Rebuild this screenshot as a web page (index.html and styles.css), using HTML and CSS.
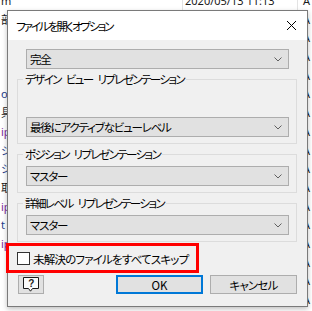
FILE: index.html
```html
<!DOCTYPE html>
<html lang="ja">
<head>
    <meta charset="UTF-8">
    <meta name="viewport" content="width=device-width, initial-scale=1.0">
    <title>ファイルを開くオプション</title>
    <link rel="stylesheet" href="styles.css">
</head>
<body>
    <!-- ファイル一覧 (ダイアログの後ろ) -->
    <div class="files">
        <div class="row first"><span class="name">m</span><span class="date">2020/05/13 11:13</span><span class="attr">A</span></div>
        <div class="row"><span class="name">部</span><span class="date"></span><span class="attr">A</span></div>
        <div class="row"><span class="name"></span><span class="date"></span><span class="attr">A</span></div>
        <div class="row"><span class="name"></span><span class="date"></span><span class="attr">A</span></div>
        <div class="row"><span class="name"></span><span class="date"></span><span class="attr">A</span></div>
        <div class="row"><span class="name blue">ot</span><span class="date"></span><span class="attr">A</span></div>
        <div class="row"><span class="name">具</span><span class="date"></span><span class="attr">A</span></div>
        <div class="row"><span class="name purple">ip</span><span class="date"></span><span class="attr">A</span></div>
        <div class="row"><span class="name blue">ジ</span><span class="date"></span><span class="attr">A</span></div>
        <div class="row"><span class="name blue">ジ</span><span class="date"></span><span class="attr">A</span></div>
        <div class="row"><span class="name">取</span><span class="date"></span><span class="attr">A</span></div>
        <div class="row"><span class="name purple">ip</span><span class="date"></span><span class="attr">A</span></div>
        <div class="row"><span class="name blue">t</span><span class="date"></span><span class="attr">A</span></div>
        <div class="row"><span class="name purple">ip</span><span class="date"></span><span class="attr">A</span></div>
        <div class="row"><span class="name"></span><span class="date"></span><span class="attr">A</span></div>
        <div class="row"><span class="name"></span><span class="date"></span><span class="attr">A</span></div>
        <div class="row"><span class="name"></span><span class="date"></span><span class="attr">A</span></div>
    </div>

    <div class="dialog">
        <div class="titlebar">
            <span class="title">ファイルを開くオプション</span>
            <svg class="close" width="9" height="9" viewBox="0 0 9 9">
                <path d="M0 0L9 9M9 0L0 9" stroke="#000" stroke-width="1"/>
            </svg>
        </div>
        <div class="content">
            <div class="select top">
                <span>完全</span>
                <svg class="chevron" width="8" height="5" viewBox="0 0 8 5"><path d="M0.5 0.5L4 4L7.5 0.5" fill="none" stroke="#606060"/></svg>
            </div>

            <fieldset class="group tall">
                <legend>デザイン ビュー リプレゼンテーション</legend>
                <div class="select">
                    <span>最後にアクティブなビューレベル</span>
                    <svg class="chevron" width="8" height="5" viewBox="0 0 8 5"><path d="M0.5 0.5L4 4L7.5 0.5" fill="none" stroke="#606060"/></svg>
                </div>
            </fieldset>

            <fieldset class="group">
                <legend>ポジション リプレゼンテーション</legend>
                <div class="select">
                    <span>マスター</span>
                    <svg class="chevron" width="8" height="5" viewBox="0 0 8 5"><path d="M0.5 0.5L4 4L7.5 0.5" fill="none" stroke="#606060"/></svg>
                </div>
            </fieldset>

            <fieldset class="group">
                <legend>詳細レベル リプレゼンテーション</legend>
                <div class="select">
                    <span>マスター</span>
                    <svg class="chevron" width="8" height="5" viewBox="0 0 8 5"><path d="M0.5 0.5L4 4L7.5 0.5" fill="none" stroke="#606060"/></svg>
                </div>
            </fieldset>

            <label class="check">
                <span class="box"></span>
                <span>未解決のファイルをすべてスキップ</span>
            </label>

            <div class="buttons">
                <button class="btn help">
                    <svg width="16" height="15" viewBox="0 0 16 15">
                        <path d="M0.5 0.5H15.5V11.5H9.5L7.5 14.2L5.5 11.5H0.5Z" fill="#fbfbfb" stroke="#1a1a1a"/>
                        <text x="8" y="9.6" text-anchor="middle" font-size="10" font-weight="bold" font-family="Liberation Sans, sans-serif" fill="#1a1a1a">?</text>
                    </svg>
                </button>
                <button class="btn ok">OK</button>
                <button class="btn cancel">キャンセル</button>
            </div>
        </div>
    </div>

    <!-- 赤い注釈枠 -->
    <div class="highlight"></div>
</body>
</html>
```

FILE: styles.css
```css
body {
    margin: 0;
    width: 312px;
    height: 311px;
    overflow: hidden;
    background: #fff;
    font-family: "Noto Sans CJK JP", sans-serif;
    font-size: 12px;
    position: relative;
}

/* ファイル一覧 */
.files {
    margin-top: -8px;
    font-family: "Noto Sans", "Noto Sans CJK JP", sans-serif;
    font-size: 11px;
    color: #1a1a1a;
}
.row {
    display: flex;
    height: 18.7px;
    line-height: 18.7px;
    white-space: nowrap;
}
.name {
    width: 182px;
    padding-left: 1px;
    box-sizing: border-box;
}
.name.blue {
    color: #27408b;
}
.name.purple {
    color: #7a2a9a;
}
.date {
    width: 115px;
    padding-left: 2px;
    box-sizing: border-box;
}
.attr {
    padding-left: 6px;
}
.row.first .date,
.row.first .attr {
    border-left: 1px solid #e3e3e3;
}
.row.first .attr {
    padding-left: 5px;
}

/* ダイアログ */
.dialog {
    position: absolute;
    left: 7px;
    top: 10px;
    width: 301px;
    box-sizing: border-box;
    border: 1px solid #7a7a7a;
    background: #f0f0f0;
    box-shadow: 0 2px 5px rgba(0, 0, 0, 0.25);
    color: #000;
    font-size: 11.5px;
    letter-spacing: -0.8px;
    font-feature-settings: "palt" 1;
}
.titlebar {
    height: 29px;
    background: #fff;
    display: flex;
    align-items: center;
    justify-content: space-between;
    padding: 0 11px 0 8px;
}
.title {
    letter-spacing: -2px;
}
.content {
    padding: 9px 0 12px 9px;
}

.select {
    width: 263px;
    height: 20px;
    box-sizing: border-box;
    border: 1px solid #adadad;
    background: #e1e1e1;
    display: flex;
    align-items: center;
    justify-content: space-between;
    padding: 0 6px 0 3px;
    letter-spacing: -1.2px;
}
.select.top {
    margin-left: 9px;
}

.group {
    width: 280px;
    box-sizing: border-box;
    margin: 3px 0 0;
    padding: 0;
    border: 1px solid #dcdcdc;
    min-inline-size: 0;
}
.group legend {
    margin-left: 5px;
    padding: 0 2px;
    line-height: 14px;
    letter-spacing: -1.6px;
    word-spacing: 4px;
}
.group .select {
    margin: 5px 0 6px 8px;
}
.group.tall .select {
    margin-top: 31px;
}

.check {
    display: flex;
    align-items: center;
    gap: 3px;
    height: 13px;
    margin-top: 10px;
}
.box {
    width: 13px;
    height: 13px;
    box-sizing: border-box;
    border: 1px solid #333;
    background: #fff;
}

.buttons {
    display: flex;
    margin-top: 10px;
}
.btn {
    height: 19px;
    box-sizing: border-box;
    border: 1px solid #adadad;
    background: #e1e1e1;
    font: inherit;
    letter-spacing: inherit;
    font-feature-settings: inherit;
    padding: 0;
    display: flex;
    align-items: center;
    justify-content: center;
    color: #000;
}
.btn.help {
    width: 26px;
    margin-left: 1px;
}
.btn.ok {
    width: 87px;
    margin-left: 72px;
    border: 2px solid #0078d7;
    letter-spacing: 0;
}
.btn.cancel {
    width: 87px;
    margin-left: 7px;
}

.highlight {
    position: absolute;
    left: 6px;
    top: 243px;
    width: 193px;
    height: 30px;
    box-sizing: border-box;
    border: 3px solid #ff0000;
}
```
